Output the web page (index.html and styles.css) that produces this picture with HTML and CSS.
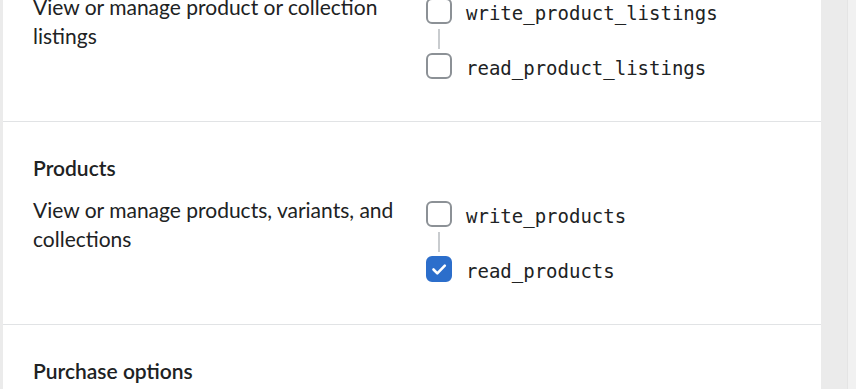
FILE: index.html
```html
<!DOCTYPE html>
<html lang="en">
<head>
    <meta charset="UTF-8">
    <meta name="viewport" content="width=device-width, initial-scale=1.0">
    <title>App scopes</title>
    <link rel="stylesheet" href="styles.css">
</head>
<body>
    <div class="page">
        <div class="card">
            <div class="section">
                <h2>Product listings</h2>
                <div class="section-body">
                    <p class="desc">View or manage product or collection listings</p>
                    <div class="perms">
                        <label class="perm">
                            <span class="box"></span>
                            <code>write_product_listings</code>
                        </label>
                        <div class="connector"></div>
                        <label class="perm">
                            <span class="box"></span>
                            <code>read_product_listings</code>
                        </label>
                    </div>
                </div>
            </div>

            <div class="section">
                <h2>Products</h2>
                <div class="section-body">
                    <p class="desc">View or manage products, variants, and collections</p>
                    <div class="perms">
                        <label class="perm">
                            <span class="box"></span>
                            <code>write_products</code>
                        </label>
                        <div class="connector"></div>
                        <label class="perm">
                            <span class="box checked">
                                <svg viewBox="0 0 26 26" width="26" height="26">
                                    <path d="M7.5 13.5l3.8 3.8L18.8 9.6" fill="none" stroke="#fff" stroke-width="2.6" stroke-linecap="round" stroke-linejoin="round"/>
                                </svg>
                            </span>
                            <code>read_products</code>
                        </label>
                    </div>
                </div>
            </div>

            <div class="section">
                <h2>Purchase options</h2>
                <div class="section-body">
                    <p class="desc">View or manage purchase options owned by this app or other apps</p>
                    <div class="perms">
                        <label class="perm">
                            <span class="box"></span>
                            <code>write_purchase_options</code>
                        </label>
                    </div>
                </div>
            </div>
        </div>
        <div class="scrollbar"></div>
    </div>
</body>
</html>
```

FILE: styles.css
```css
body {
    margin: 0;
    background-color: #ebebeb;
    font-family: Lato, "Noto Sans", sans-serif;
    color: #202223;
    overflow: hidden;
}
.page {
    display: flex;
    height: 100vh;
    padding-left: 3px;
}
.card {
    width: 818px;
    margin-top: -81px;
    background: white;
    flex-shrink: 0;
}
.section {
    padding: 31px 30px 42px;
    border-top: 1px solid #e1e3e5;
}
.section:first-child {
    border-top: none;
}
.section h2 {
    margin: 0 0 13px;
    font-size: 21px;
    line-height: 29px;
    font-weight: 600;
}
.section-body {
    display: grid;
    grid-template-columns: 393px 1fr;
}
.desc {
    margin: 0;
    font-size: 21px;
    line-height: 29px;
    padding-right: 20px;
}
.perms {
    padding-top: 6px;
}
.perm {
    display: flex;
    align-items: center;
    gap: 14px;
}
.box {
    position: relative;
    width: 26px;
    height: 26px;
    box-sizing: border-box;
    border: 2px solid #8c9196;
    border-radius: 6px;
    flex-shrink: 0;
}
.box.checked {
    background-color: #2c6ecb;
    border-color: #2c6ecb;
}
.box svg {
    position: absolute;
    top: -2px;
    left: -2px;
}
.connector {
    width: 2px;
    height: 20px;
    margin: 5px 0 4px 12px;
    background-color: #c9cccf;
}
code {
    font-family: "DejaVu Sans Mono", monospace;
    font-size: 19px;
    color: #202223;
    padding-top: 3px;
}
.scrollbar {
    margin-left: auto;
    width: 8px;
    background-color: #f1f1f1;
    border-left: 1px solid #e4e4e4;
}
```
